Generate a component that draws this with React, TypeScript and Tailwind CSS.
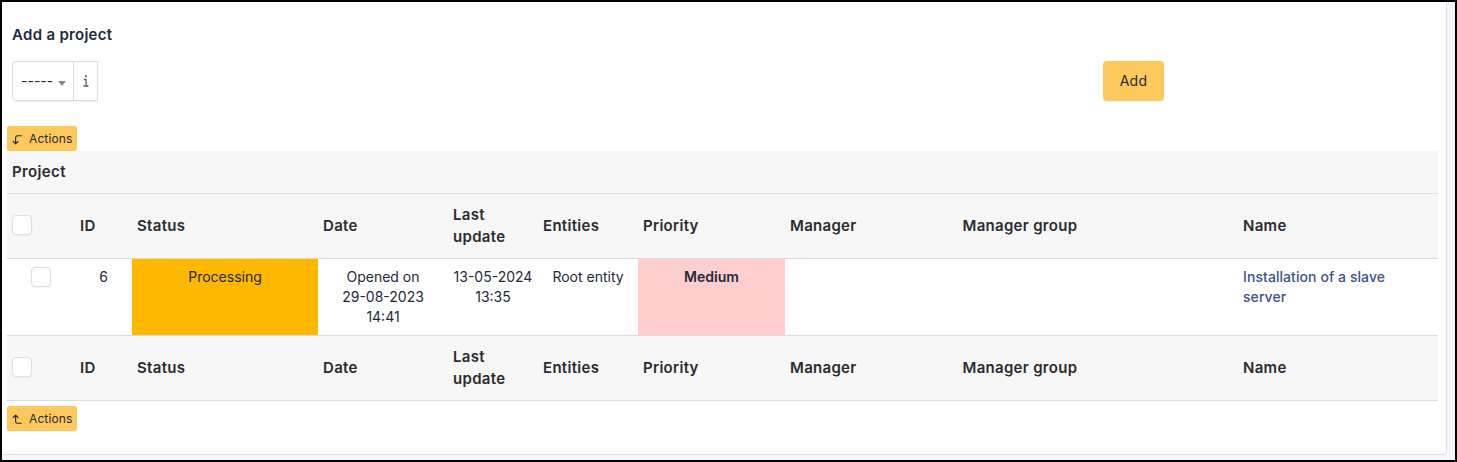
import React from "react";
import { TbCornerLeftDown, TbCornerLeftUp } from "react-icons/tb";

const columns = [
  "ID",
  "Status",
  "Date",
  "Last update",
  "Entities",
  "Priority",
  "Manager",
  "Manager group",
  "Name",
];

const grid =
  "grid grid-cols-[68px_57px_186px_130px_90px_100px_147px_172.5px_280.5px_200px] border-b border-[#dadce0]";

function Checkbox() {
  return (
    <input
      type="checkbox"
      className="block size-5 appearance-none rounded-[4px] border border-[#dcdfe6] bg-white shadow-[0_1px_2px_rgba(30,41,59,0.06)]"
    />
  );
}

function ActionsButton({ up = false }: { up?: boolean }) {
  return (
    <button className="flex h-[25px] w-[70px] items-center rounded-[2px] bg-[#fec95c] pl-[3px] text-[12px] leading-4 tracking-[0.01em] text-[#1e293b] shadow-[0_1px_1px_rgba(30,41,59,0.05)]">
      {up ? (
        <TbCornerLeftUp className="mt-0.5 size-[15px] shrink-0" strokeWidth={1.8} />
      ) : (
        <TbCornerLeftDown className="mt-0.5 size-[15px] shrink-0" strokeWidth={1.8} />
      )}
      <span className="ml-1">Actions</span>
    </button>
  );
}

function HeadingRow() {
  return (
    <div className={grid + " h-[65px] items-center bg-[#f7f7f7] text-[15px] font-semibold leading-[22px] tracking-[0.02em] text-[#2b2b2f]"}>
      <div className="pb-0.5 pl-[5px]">
        <Checkbox />
      </div>
      {columns.map((c) => (
        <div key={c} className="px-[5px]">
          {c}
        </div>
      ))}
    </div>
  );
}

export default function App() {
  return (
    <div className="h-[462px] w-[1457px] overflow-hidden border-2 border-black bg-[#f5f7fb] font-['Inter',sans-serif] text-[14px] leading-5 text-[#1e293b]">
      <div className="flex h-[453px] w-[1445px] flex-col rounded-br-[4px] border-r border-b border-[#dadfe5] bg-white pl-[5px]">
        <h2 className="mt-[22px] pl-[5px] text-[15px] font-semibold leading-[22px] tracking-[0.02em]">Add a project</h2>
        <div className="mt-[15px] flex h-10 pl-[5px]">
          <div className="flex rounded-l-[4px] shadow-[0_1px_2px_rgba(30,41,59,0.06)]">
            <button className="flex w-[62px] items-center rounded-l-[4px] border border-[#dadfe6] pl-2">
              <span className="w-8 text-left whitespace-nowrap">-----</span>
              <span className="mt-1 ml-[5px] border-x-4 border-t-[5px] border-x-transparent border-t-[#888888]" />
            </button>
            <span className="-ml-px flex w-[25px] items-center justify-center border border-[#dadfe6] text-[#536273]">
              <svg viewBox="0 0 6 12" className="h-3 w-1.5" fill="none" stroke="currentColor" strokeWidth="1.3">
                <path d="M3 0.3v2" strokeWidth="1.8" />
                <path d="M0.7 4.5h2.4v6.2M0.5 11h5" />
              </svg>
            </span>
          </div>
          <button className="ml-[1005px] h-10 w-[61px] rounded-[4px] bg-[#fec95c] font-normal tracking-[0.02em] shadow-[0_1px_1px_rgba(30,41,59,0.05)]">
            Add
          </button>
        </div>
        <div className="mt-[25px]">
          <ActionsButton />
        </div>
        <div className="w-[1431px]">
          <div className="h-[43px] border-b border-[#dadce0] bg-[#f7f7f7] pt-[10px] pl-[5px] text-[15px] font-semibold leading-[22px] tracking-[0.025em] text-[#2b2b2f]">
            Project
          </div>
          <HeadingRow />
          <div className={grid + " h-[77px] text-center [&>div]:px-[5px] [&>div]:pt-2"}>
            <div className="flex justify-center">
              <Checkbox />
            </div>
            <div>6</div>
            <div className="bg-[#ffb800]">Processing</div>
            <div>
              Opened on
              <br />
              29-08-2023
              <br />
              14:41
            </div>
            <div className="whitespace-nowrap">
              13-05-2024
              <br />
              13:35
            </div>
            <div>Root entity</div>
            <div className="bg-[#ffcece] font-semibold">Medium</div>
            <div />
            <div />
            <div className="text-left font-medium tracking-[0.005em] text-[#3f4f8a]">
              <a href="#name">
                Installation of a slave
                <br />
                server
              </a>
            </div>
          </div>
          <HeadingRow />
        </div>
        <div className="mt-[5px]">
          <ActionsButton up />
        </div>
      </div>
    </div>
  );
}
